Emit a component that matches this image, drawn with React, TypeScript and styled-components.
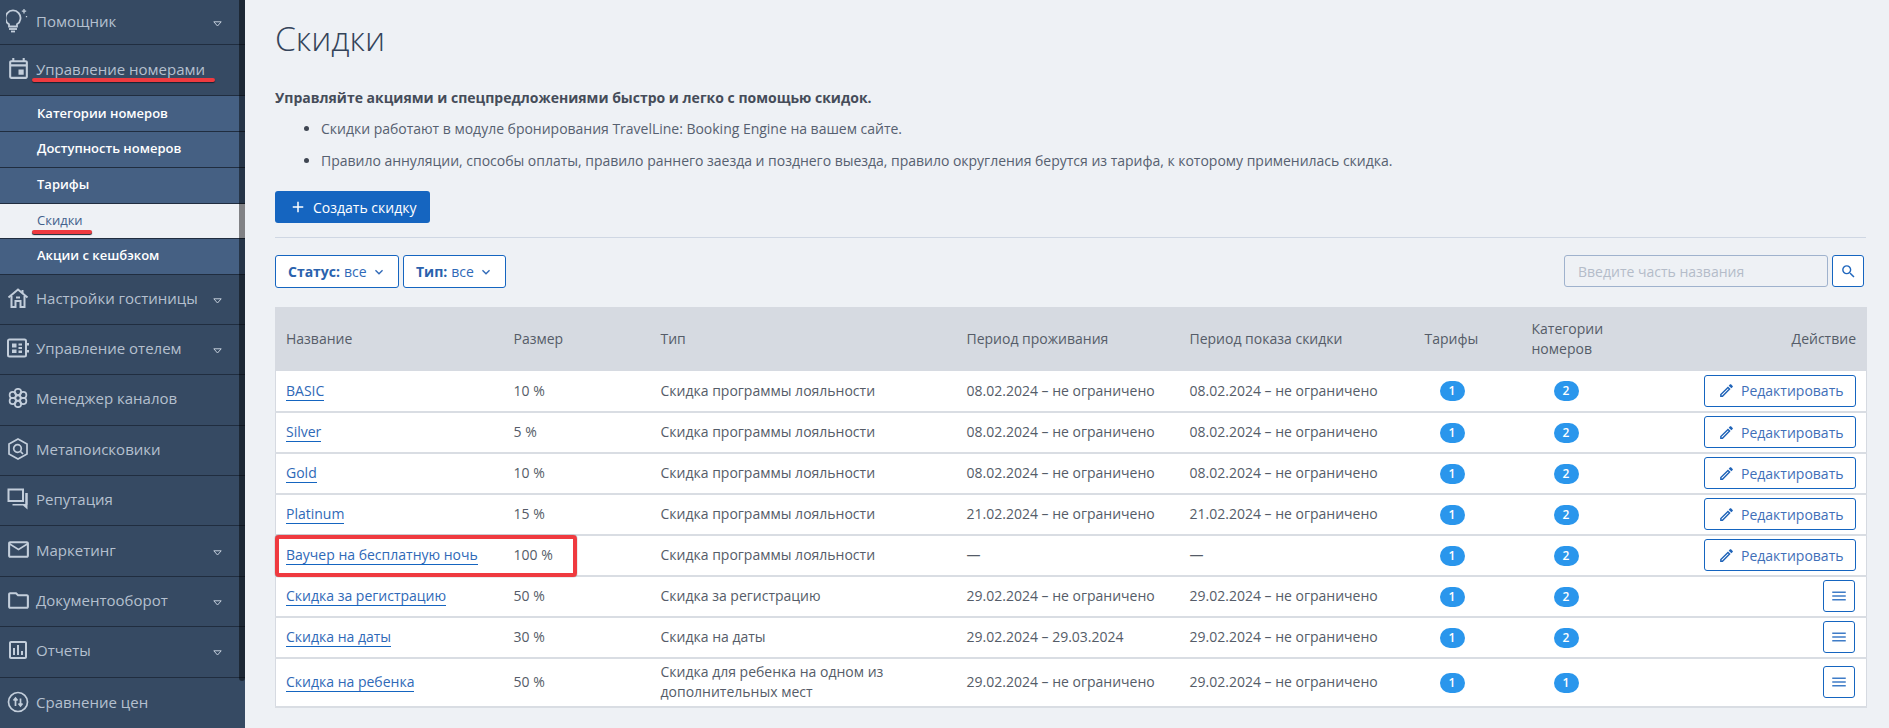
import React from "react";
import styled, { createGlobalStyle } from "styled-components";
import { MdOutlineEdit, MdSearch, MdMenu, MdAdd, MdKeyboardArrowDown, MdOutlineEvent, MdMailOutline, MdOutlineFolder, MdOutlineAssessment } from "react-icons/md";

const Global = createGlobalStyle`
  html, body { margin: 0; padding: 0; height: 728px; overflow: hidden; background: #eef1f5; }
  body { font-family: "Open Sans", "Liberation Sans", sans-serif; font-size: 14px; color: #4a5160; }
  * { box-sizing: border-box; }
`;

const Page = styled.div`
  position: relative;
  display: flex;
  width: 1889px;
  height: 728px;
  overflow: hidden;
`;

const Sidebar = styled.nav`
  position: relative;
  flex: 0 0 245px;
  display: flex;
  flex-direction: column;
  background: #364a63;
`;

const Scroll = styled.div`
  position: absolute;
  top: 0;
  left: 239px;
  width: 6px;
  height: 681px;
  background: rgba(0, 0, 0, 0.46);
  border-radius: 0 0 3px 3px;
`;

const NavRow = styled.div<{ $h: number; $last?: boolean }>`
  height: ${(p) => p.$h}px;
  flex: none;
  display: flex;
  align-items: center;
  padding: 0 0 3px 6px;
  border-bottom: ${(p) => (p.$last ? "0" : "1px solid #202d3f")};
  color: #b5c0cf;
  font-size: 15px;
`;

const NavIcon = styled.span`
  width: 24px;
  height: 24px;
  margin-right: 6px;
  color: #c3cedb;
  display: flex;
  align-items: center;
  justify-content: center;
  svg { display: block; flex: none; }
`;

const NavLabel = styled.span`
  flex: 1;
  white-space: nowrap;
`;

const Caret = styled.svg`
  width: 9px;
  height: 6px;
  margin-right: 23px;
  margin-top: 6px;
  flex: none;
`;

const SubRow = styled.div<{ $active?: boolean; $h: number }>`
  height: ${(p) => p.$h}px;
  flex: none;
  display: flex;
  align-items: center;
  padding: 0 0 2px 37px;
  font-size: 13px;
  font-weight: ${(p) => (p.$active ? 400 : 600)};
  color: ${(p) => (p.$active ? "#42608c" : "#ffffff")};
  background: ${(p) => (p.$active ? "#eef1f5" : "#456083")};
  border-bottom: 1px solid #202d3f;
`;

const Main = styled.main`
  flex: 1;
  padding: 0 23px 0 30px;
  min-width: 0;
`;

const Title = styled.h1`
  margin: 0;
  padding-top: 14px;
  height: 84px;
  font-size: 33.5px;
  line-height: 48px;
  font-weight: 300;
  color: #34445a;
`;

const Lead = styled.p`
  margin: 0;
  height: 28px;
  line-height: 28px;
  font-weight: 700;
  font-size: 14px;
  color: #454c59;
`;

const Bullets = styled.ul`
  margin: 0;
  padding: 1px 0 0 46px;
  height: 79px;
  li { line-height: 32px; height: 32px; font-size: 14px; color: #566070; letter-spacing: -0.016px; }
  li::marker { color: #3f4652; }
`;

const Primary = styled.button`
  display: flex;
  align-items: center;
  height: 32px;
  width: 155px;
  padding: 0 0 0 14px;
  margin: 0;
  border: 0;
  border-radius: 3px;
  background: #1565c0;
  color: #fff;
  font: 400 14px "Open Sans", sans-serif;
  svg { margin-right: 6px; }
`;

const Rule = styled.hr`
  border: 0;
  border-top: 1px solid #cfd7e3;
  margin: 14px 0 17px;
`;

const Filters = styled.div`
  display: flex;
  height: 33px;
  gap: 4px;
  margin-bottom: 19px;
`;

const Filter = styled.button<{ $w: number }>`
  width: ${(p) => p.$w}px;
  height: 33px;
  padding: 0 0 0 12px;
  display: flex;
  align-items: center;
  background: #fff;
  border: 1px solid #1565c0;
  border-radius: 3px;
  color: #2f69b7;
  font: 400 14px "Open Sans", sans-serif;
  b { font-weight: 700; margin-right: 4px; color: #2a62ad; }
  svg { margin-left: 4px; }
`;

const SearchWrap = styled.div`
  margin-left: auto;
  display: flex;
  gap: 4px;
  padding-right: 2px;
`;

const SearchInput = styled.input`
  width: 264px;
  height: 32px;
  padding: 0 13px;
  background: #eef1f5;
  border: 1px solid #9fb2cd;
  border-radius: 3px;
  font: 400 14px "Open Sans", sans-serif;
  &::placeholder { color: #b4bcc9; opacity: 1; }
`;

const SearchBtn = styled.button`
  width: 32px;
  height: 32px;
  padding: 0;
  display: flex;
  align-items: center;
  justify-content: center;
  background: #fff;
  border: 1px solid #1565c0;
  border-radius: 3px;
  color: #1f66bd;
`;

const Table = styled.table`
  width: 1591px;
  table-layout: fixed;
  border-collapse: collapse;
  background: #fff;
  border: 1px solid #d6dae1;
  font-size: 14px;
`;

const HeadRow = styled.tr`
  height: 63px;
  background: #d6dae1;
`;

const Th = styled.th<{ $right?: boolean }>`
  padding: 0 10px;
  font-weight: 400;
  line-height: 20px;
  text-align: ${(p) => (p.$right ? "right" : "left")};
  color: #555c68;
`;

const Row = styled.tr<{ $h?: number }>`
  height: ${(p) => p.$h ?? 41}px;
  border-bottom: 2px solid #d9dde3;
`;

const Td = styled.td<{ $right?: boolean }>`
  padding: 0 10px;
  line-height: 20px;
  color: #555c68;
  text-align: ${(p) => (p.$right ? "right" : "left")};
`;

const Name = styled.a`
  color: #2f69b7;
  text-decoration: none;
  border-bottom: 1px solid #1565c0;
`;

const Badge = styled.span<{ $ml: number }>`
  display: inline-flex;
  align-items: center;
  justify-content: center;
  vertical-align: middle;
  margin-left: ${(p) => p.$ml}px;
  width: 25px;
  height: 20px;
  border-radius: 10px;
  background: #2a96ec;
  color: #fff;
  font-size: 12px;
  font-weight: 600;
`;

const Edit = styled.button`
  display: inline-flex;
  align-items: center;
  vertical-align: middle;
  width: 152px;
  height: 32px;
  padding: 0 0 0 13px;
  background: #fff;
  border: 1px solid #1565c0;
  border-radius: 3px;
  color: #3f6fb8;
  font: 400 14px "Open Sans", sans-serif;
  svg { margin-right: 6px; color: #1f63b8; }
`;

const MenuBtn = styled.button`
  display: inline-flex;
  align-items: center;
  justify-content: center;
  vertical-align: middle;
  width: 32px;
  height: 32px;
  margin-right: 1px;
  padding: 0;
  background: #fff;
  border: 1px solid #1565c0;
  border-radius: 3px;
  color: #3f7cc7;
`;

const RedBox = styled.div`
  position: absolute;
  left: 275px;
  top: 535px;
  width: 302px;
  height: 42px;
  border: 4px solid #ef3a3f;
  border-radius: 4px;
  box-shadow: 0 0 1px #333;
`;

const RedLine = styled.div<{ $l: number; $t: number; $w: number }>`
  position: absolute;
  left: ${(p) => p.$l}px;
  top: ${(p) => p.$t}px;
  width: ${(p) => p.$w}px;
  height: 4px;
  background: #ef3a3f;
  border-radius: 2px;
  box-shadow: 0 1px 1px #1a2230;
`;

const s = { fill: "none", stroke: "currentColor", strokeWidth: 1.8 } as const;

const Bulb = () => (
  <svg width="24" height="26" viewBox="0 0 24 26" {...s}>
    <path d="M3 16.300A7.500 7.500 0 1 1 11 16.300V18.500H3z" />
    <path d="M3 21h8" />
    <path d="M5 23.500h4" />
    <path d="M18 1v4.500M15.800 3.200h4.400M20.500 8v1.300" strokeWidth="1.3" />
  </svg>
);
const Home = () => (
  <svg width="22" height="22" viewBox="0 0 22 22" {...s} strokeWidth="2">
    <path d="M1.500 10.500 11 2.500l9.500 8" />
    <path d="M4.500 9v11h4v-6h5v6h4V9" />
    <path d="M15.500 3v3M9 10.500h4" />
  </svg>
);
const Hotel = () => (
  <svg width="22" height="20" viewBox="0 0 22 20" {...s} strokeWidth="2">
    <rect x="1" y="1.500" width="18" height="17" rx="1.500" />
    <path d="M5 5.500h4.500v4H5zM5 11.500h4.500v3.500H5z" fill="currentColor" stroke="none" />
    <path d="M11.500 5.500H15v2h-3.500zM11.500 9H15v2h-3.500zM11.500 12.500H15v2.500h-3.500z" fill="currentColor" stroke="none" />
    <path d="M21 5v2.500M21 12v2.500" />
  </svg>
);
const Flower = () => (
  <svg width="20" height="20" viewBox="0 0 20 20" {...s} strokeWidth="1.7">
    <circle cx="10" cy="10" r="2.700" />
    <circle cx="10" cy="4" r="3.200" />
    <circle cx="10" cy="16" r="3.200" />
    <circle cx="4.800" cy="7" r="3.200" />
    <circle cx="15.200" cy="7" r="3.200" />
    <circle cx="4.800" cy="13" r="3.200" />
    <circle cx="15.200" cy="13" r="3.200" />
  </svg>
);
const Meta = () => (
  <svg width="20" height="22" viewBox="0 0 20 22" {...s} strokeWidth="1.7">
    <path d="M10 1 19 6v10l-9 5-9-5V6z" />
    <circle cx="9.500" cy="10.500" r="3.800" />
    <path d="m12.500 13.500 2.500 2.500" />
  </svg>
);
const Reviews = () => (
  <svg width="22" height="22" viewBox="0 0 22 22" {...s} strokeWidth="2">
    <path d="M5 13H1.500V1.500H16V9" />
    <path d="M5 13h11V9" />
    <path d="M19.500 5v11.500" strokeWidth="2.500" />
    <path d="M5.500 16h15v5.500L16 17.500H5.500z" fill="currentColor" stroke="none" />
  </svg>
);
const Compare = () => (
  <svg width="22" height="22" viewBox="0 0 22 22" {...s} strokeWidth="1.700">
    <circle cx="11" cy="11" r="9.500" />
    <path d="M8.500 15V7.500M6.500 9.500l2-2.500 2 2.500" />
    <path d="M13.500 7.500V15M11.500 12.500l2 2.500 2-2.500" />
  </svg>
);
const Tri = () => (
  <Caret viewBox="0 0 9 6" fill="none" stroke="#c3cedb" strokeWidth="1">
    <path d="M.8.8h7.400L4.500 5z" />
  </Caret>
);

const H = 50.4;
const nav1 = [
  { l: "Настройки гостиницы", i: <Home />, c: true },
  { l: "Управление отелем", i: <Hotel />, c: true },
  { l: "Менеджер каналов", i: <Flower /> },
  { l: "Метапоисковики", i: <Meta /> },
  { l: "Репутация", i: <Reviews /> },
  { l: "Маркетинг", i: <MdMailOutline size={25} />, c: true },
  { l: "Документооборот", i: <MdOutlineFolder size={25} />, c: true },
  { l: "Отчеты", i: <MdOutlineAssessment size={24} />, c: true },
];

const subs = ["Категории номеров", "Доступность номеров", "Тарифы", "Скидки", "Акции с кешбэком"];

const loyal = "Скидка программы лояльности";
const rows = [
  { n: "BASIC", p: "10 %", t: loyal, a: "08.02.2024 – не ограничено", b: "08.02.2024 – не ограничено", c: 2, e: true },
  { n: "Silver", p: "5 %", t: loyal, a: "08.02.2024 – не ограничено", b: "08.02.2024 – не ограничено", c: 2, e: true },
  { n: "Gold", p: "10 %", t: loyal, a: "08.02.2024 – не ограничено", b: "08.02.2024 – не ограничено", c: 2, e: true },
  { n: "Platinum", p: "15 %", t: loyal, a: "21.02.2024 – не ограничено", b: "21.02.2024 – не ограничено", c: 2, e: true },
  { n: "Ваучер на бесплатную ночь", p: "100 %", t: loyal, a: "—", b: "—", c: 2, e: true },
  { n: "Скидка за регистрацию", p: "50 %", t: "Скидка за регистрацию", a: "29.02.2024 – не ограничено", b: "29.02.2024 – не ограничено", c: 2 },
  { n: "Скидка на даты", p: "30 %", t: "Скидка на даты", a: "29.02.2024 – 29.03.2024", b: "29.02.2024 – не ограничено", c: 2 },
  { n: "Скидка на ребенка", p: "50 %", t: "Скидка для ребенка на одном из дополнительных мест", a: "29.02.2024 – не ограничено", b: "29.02.2024 – не ограничено", c: 1, h: 49 },
];

const widths = [228, 147, 306, 223, 235, 107, 120, 225];

export default function App() {
  return (
    <Page>
      <Global />
      <Sidebar>
        <NavRow $h={45}>
          <NavIcon><Bulb /></NavIcon>
          <NavLabel>Помощник</NavLabel>
          <Tri />
        </NavRow>
        <NavRow $h={51}>
          <NavIcon><MdOutlineEvent size={25} /></NavIcon>
          <NavLabel>Управление номерами</NavLabel>
        </NavRow>
        {subs.map((x, i) => (
          <SubRow key={x} $active={i === 3} $h={i === 0 || i === 2 ? 36 : 35.5}>{x}</SubRow>
        ))}
        {nav1.map((n) => (
          <NavRow key={n.l} $h={H}>
            <NavIcon>{n.i}</NavIcon>
            <NavLabel>{n.l}</NavLabel>
            {n.c && <Tri />}
          </NavRow>
        ))}
        <NavRow $h={51} $last>
          <NavIcon><Compare /></NavIcon>
          <NavLabel>Сравнение цен</NavLabel>
        </NavRow>
        <Scroll />
      </Sidebar>
      <Main>
        <Title>Скидки</Title>
        <Lead>Управляйте акциями и спецпредложениями быстро и легко с помощью скидок.</Lead>
        <Bullets>
          <li>Скидки работают в модуле бронирования TravelLine: Booking Engine на вашем сайте.</li>
          <li>Правило аннуляции, способы оплаты, правило раннего заезда и позднего выезда, правило округления берутся из тарифа, к которому применилась скидка.</li>
        </Bullets>
        <Primary><MdAdd size={18} />Создать скидку</Primary>
        <Rule />
        <Filters>
          <Filter $w={124}><b>Статус:</b>все<MdKeyboardArrowDown size={16} /></Filter>
          <Filter $w={103}><b>Тип:</b>все<MdKeyboardArrowDown size={16} /></Filter>
          <SearchWrap>
            <SearchInput placeholder="Введите часть названия" />
            <SearchBtn><MdSearch size={17} /></SearchBtn>
          </SearchWrap>
        </Filters>
        <Table>
          <colgroup>
            {widths.map((w, i) => <col key={i} style={{ width: w }} />)}
          </colgroup>
          <thead>
            <HeadRow>
              <Th>Название</Th>
              <Th>Размер</Th>
              <Th>Тип</Th>
              <Th>Период проживания</Th>
              <Th>Период показа скидки</Th>
              <Th>Тарифы</Th>
              <Th>Категории номеров</Th>
              <Th $right>Действие</Th>
            </HeadRow>
          </thead>
          <tbody>
            {rows.map((r) => (
              <Row key={r.n} $h={r.h}>
                <Td><Name>{r.n}</Name></Td>
                <Td>{r.p}</Td>
                <Td>{r.t}</Td>
                <Td>{r.a}</Td>
                <Td>{r.b}</Td>
                <Td><Badge $ml={15}>1</Badge></Td>
                <Td><Badge $ml={22}>{r.c}</Badge></Td>
                <Td $right>
                  {r.e ? (
                    <Edit><MdOutlineEdit size={17} />Редактировать</Edit>
                  ) : (
                    <MenuBtn><MdMenu size={18} /></MenuBtn>
                  )}
                </Td>
              </Row>
            ))}
          </tbody>
        </Table>
      </Main>
      <RedLine $l={32} $t={78} $w={183} />
      <RedLine $l={32} $t={230} $w={60} />
      <RedBox />
    </Page>
  );
}
